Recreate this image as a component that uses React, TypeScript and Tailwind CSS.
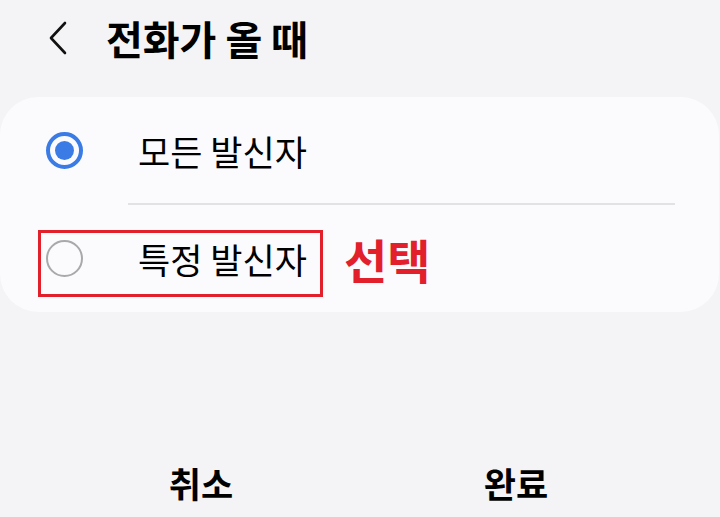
import React from "react";

const FONT = { fontFamily: '"Noto Sans CJK KR", "Noto Sans", sans-serif' };

function Radio({ checked }: { checked: boolean }) {
  return checked ? (
    <span className="flex h-[37px] w-[37px] items-center justify-center rounded-full border-[4px] border-[#3b7be6]">
      <span className="h-[19px] w-[19px] rounded-full bg-[#3b7be6]" />
    </span>
  ) : (
    <span className="block h-[37px] w-[37px] rounded-full border-[2.5px] border-[#a9a9ab]" />
  );
}

export default function App() {
  return (
    <div className="flex h-[517px] w-[720px] flex-col bg-[#f4f4f6] text-black" style={FONT}>
      <header className="flex h-[97px] items-center pb-[22px]">
        <svg className="ml-[47px] h-[36px] w-[22px]" viewBox="0 0 22 36" fill="none">
          <path d="M18 3 L4 18 L18 33" stroke="#111" strokeWidth="2.6" strokeLinecap="round" strokeLinejoin="round" />
        </svg>
        <h1 className="ml-[37px] text-[40px] font-bold leading-none">전화가 올 때</h1>
      </header>

      <section className="w-[719px] rounded-[38px] bg-[#fbfbfe]">
        <div className="flex h-[106px] items-center">
          <div className="ml-[46px] mr-[55px]">
            <Radio checked />
          </div>
          <span className="text-[35px] leading-none">모든 발신자</span>
        </div>
        <div className="ml-[128px] mr-[44px] h-[2px] bg-[#e2e2e6]" />
        <div className="relative flex h-[107px] items-center">
          <div className="ml-[46px] mr-[55px]">
            <Radio checked={false} />
          </div>
          <span className="text-[35px] leading-none">특정 발신자</span>
          <div className="absolute left-[38px] top-[25px] h-[67px] w-[285px] border-[3.5px] border-[#e2202c]" />
          <span className="absolute left-[344px] top-[30px] text-[47px] font-bold leading-none text-[#e2202c]">
            선택
          </span>
        </div>
      </section>

      <footer className="mt-auto flex h-[52px] items-start">
        <div className="flex w-1/2 justify-center pl-[42px]">
          <button className="text-[35px] font-bold leading-none">취소</button>
        </div>
        <div className="flex w-1/2 justify-center pr-[48px]">
          <button className="text-[35px] font-bold leading-none">완료</button>
        </div>
      </footer>
    </div>
  );
}
